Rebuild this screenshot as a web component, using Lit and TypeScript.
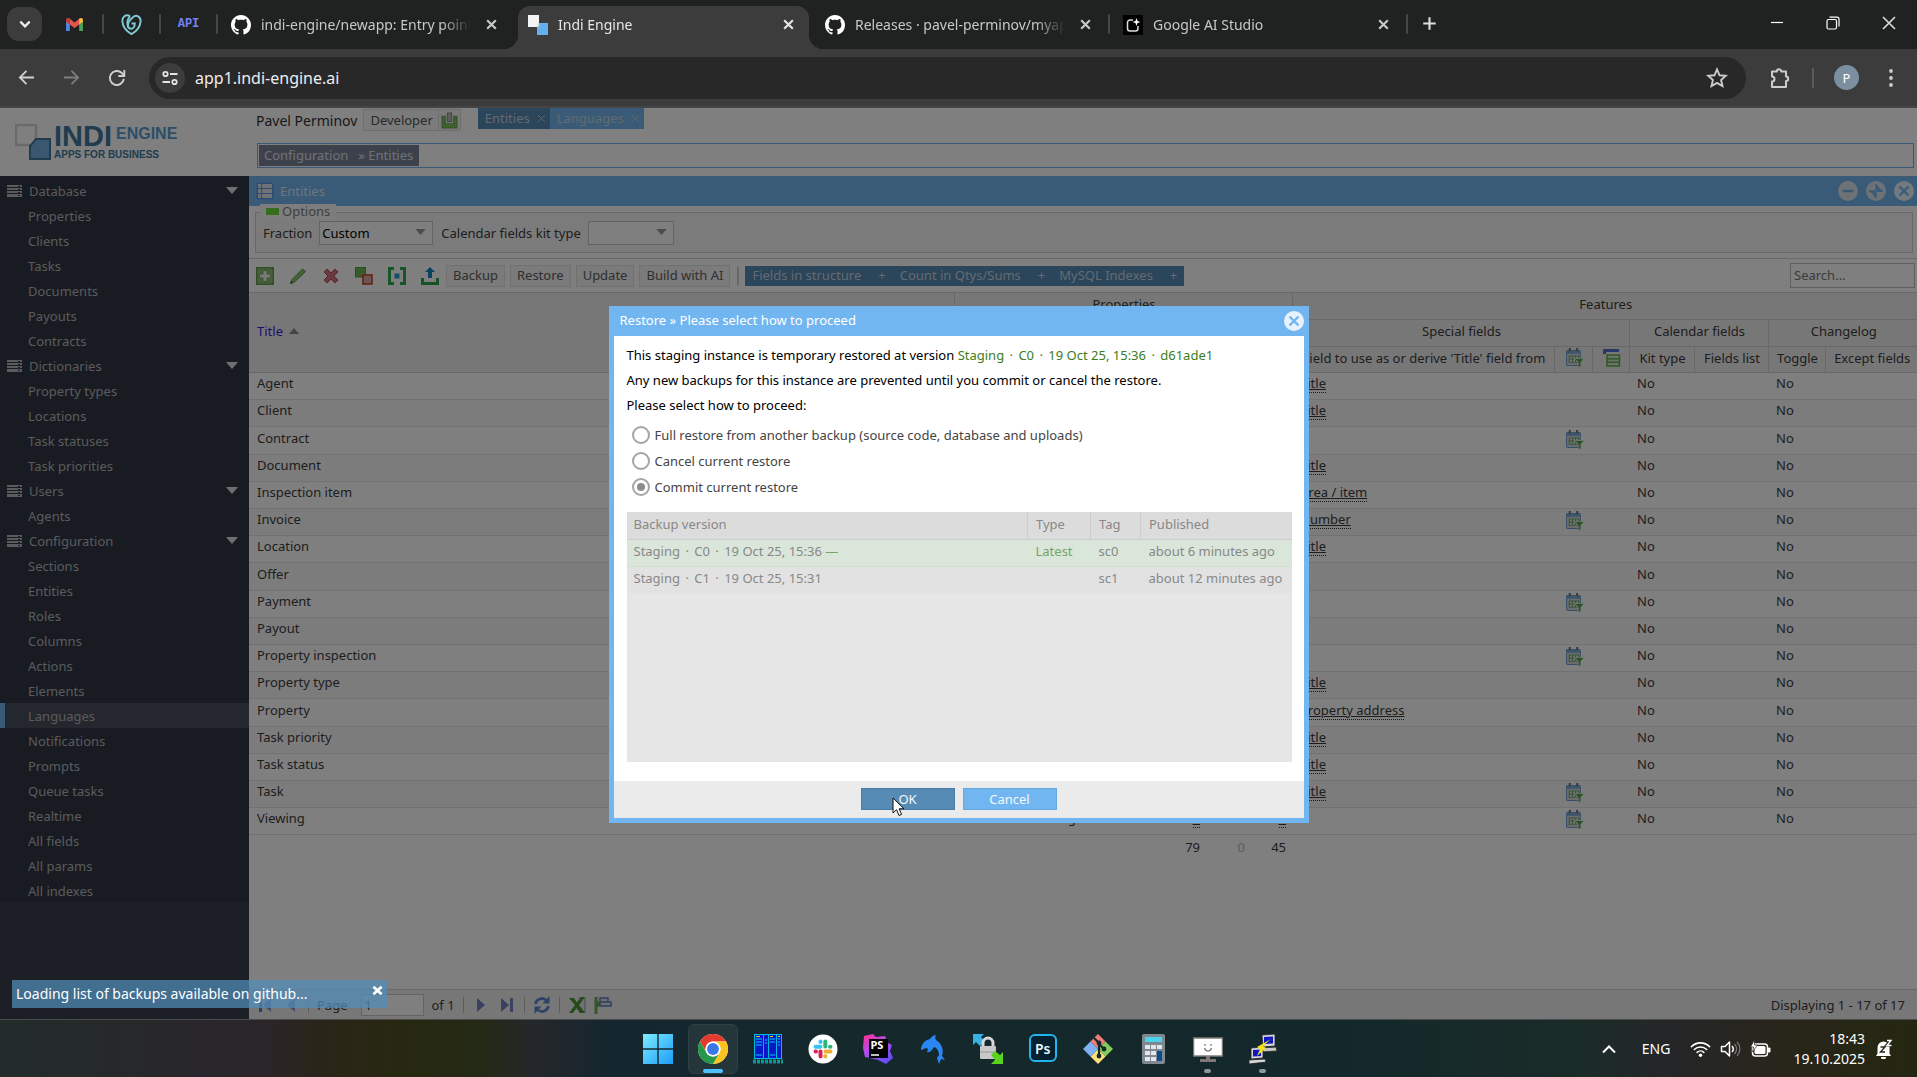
import { LitElement, html, css, svg, nothing } from "lit";
import { customElement, property } from "lit/decorators.js";
import { classMap } from "lit/directives/class-map.js";

/* ---------- shared icons ---------- */

const github = svg`<path fill="#fff" d="M8 0C3.58 0 0 3.58 0 8c0 3.54 2.29 6.53 5.47 7.59.4.07.55-.17.55-.38 0-.19-.01-.82-.01-1.49-2.01.37-2.53-.49-2.69-.94-.09-.23-.48-.94-.82-1.13-.28-.15-.68-.52-.01-.53.63-.01 1.08.58 1.23.82.72 1.21 1.87.87 2.33.66.07-.52.28-.87.51-1.07-1.78-.2-3.64-.89-3.64-3.95 0-.87.31-1.59.82-2.15-.08-.2-.36-1.02.08-2.12 0 0 .67-.21 2.2.82.64-.18 1.32-.27 2-.27s1.36.09 2 .27c1.53-1.04 2.2-.82 2.2-.82.44 1.1.16 1.92.08 2.12.51.56.82 1.27.82 2.15 0 3.07-1.87 3.75-3.65 3.95.29.25.54.73.54 1.48 0 1.07-.01 1.93-.01 2.2 0 .21.15.46.55.38A8.01 8.01 0 0 0 16 8c0-4.42-3.58-8-8-8z"/>`;

const icons: Record<string, [string, unknown]> = {
  github: ["0 0 16 16", github],
  indi: ["0 0 20 20", svg`<rect x="9" y="8" width="11" height="12" fill="#62b0ee"/><rect x="0" y="0" width="11" height="12" fill="#f4f4f4"/><path d="M11 8v4H9" fill="none" stroke="#9bb" />`],
  studio: ["0 0 20 20", svg`<rect width="20" height="20" fill="#000"/><path d="M10 5H7a2.500 2.500 0 0 0-2.500 2.500v6A2.500 2.500 0 0 0 7 16h5.500a2.500 2.500 0 0 0 2.500-2.500V11" fill="none" stroke="#ddd" stroke-width="1.500"/><path d="M13.500 3l1 3 3 1-3 1-1 3-1-3-3-1 3-1z" fill="#fff"/>`],
  gmail: ["0 0 20 16", svg`<path d="M1 3v12h4V7z" fill="#4f86ec"/><path d="M19 3v12h-4V7z" fill="#4aa35a"/><path d="M1 3.500C1 1 3.500.500 5 1.800l5 4 5-4C16.500.500 19 1 19 3.500V5l-4 3-5 3.800L5 8 1 5z" fill="#e0564a"/><path d="M15 1.800C16.500.500 19 1 19 3.500V5l-4 3z" fill="#f0bd3c"/><path d="M5 1.800C3.500.500 1 1 1 3.500V5l4 3z" fill="#b93a35"/>`],
  heart: ["0 0 22 22", svg`<g fill="none" stroke="#7fcbd3" stroke-width="2"><path d="M9.500 2.500C5-.5 1 3 1.500 8c.5 6 5 10.500 9.500 13 4.500-2.500 9-7 9.500-13C21 3 16 0 12.500 3.500 8.500 7 6 11 8 14.500"/><path d="M9.500 2.500C6.500 5 5.500 10 8 14.500c3 2 6.500.5 6.500-4.500h-3.500"/></g>`],
  close: ["0 0 12 12", svg`<path d="M2 2l8 8M10 2l-8 8" stroke="currentColor" stroke-width="2" fill="none"/>`],
  boldClose: ["0 0 12 12", svg`<path d="M1.500 2l9 8M10.500 2l-9 8" stroke="currentColor" stroke-width="3" fill="none"/>`],
  thinClose: ["0 0 12 12", svg`<path d="M1.500 1.500l9 9M10.500 1.500l-9 9" stroke="currentColor" stroke-width="1.200" fill="none"/>`],
  plus: ["0 0 12 12", svg`<path d="M6 1v10M1 6h10" stroke="currentColor" stroke-width="1.700" fill="none"/>`],
  chevron: ["0 0 12 12", svg`<path d="M2 4l4 4 4-4" stroke="#eee" stroke-width="2" fill="none"/>`],
  min: ["0 0 14 14", svg`<path d="M1 6.500h12" stroke="#fff" stroke-width="1.200"/>`],
  max: ["0 0 14 14", svg`<rect x="1" y="3.500" width="9.500" height="9.500" rx="1.500" fill="none" stroke="#fff" stroke-width="1.200"/><path d="M3.500 1.200H11a2 2 0 0 1 2 2v7.300" fill="none" stroke="#fff" stroke-width="1.200"/>`],
  back: ["0 0 18 18", svg`<path d="M17 9H2.500M9 2L2 9l7 7" fill="none" stroke="#d0d0d0" stroke-width="1.900"/>`],
  fwd: ["0 0 18 18", svg`<path d="M1 9h14.500M9 2l7 7-7 7" fill="none" stroke="#7d7d7d" stroke-width="1.900"/>`],
  reload: ["0 0 18 18", svg`<path d="M15.800 9.800A7 7 0 1 1 13.800 4l2 2" fill="none" stroke="#d0d0d0" stroke-width="1.900"/><path d="M16.300 1v6h-6" fill="none" stroke="#d0d0d0" stroke-width="1.900"/>`],
  tune: ["0 0 16 16", svg`<g fill="none" stroke="#e4e4e4" stroke-width="1.800"><circle cx="3.500" cy="4" r="2.200"/><path d="M8 4h7.500M.5 12H8"/><circle cx="12.500" cy="12" r="2.200"/></g>`],
  star: ["0 0 20 20", svg`<path d="M10 2.200l2.300 5.300 5.700.5-4.300 3.800 1.300 5.600-5-3-5 3 1.300-5.600L2 8l5.700-.5z" fill="none" stroke="#ccc" stroke-width="1.700"/>`],
  puzzle: ["0 0 22 22", svg`<path d="M3 4.500h4.800a2.200 2.200 0 0 1 4.400 0H17v5a2.200 2.200 0 0 1 0 4.400V20H3v-5.500a2.500 2.500 0 0 0 0-5z" fill="none" stroke="#ccc" stroke-width="2" stroke-linejoin="round"/>`],
  dots: ["0 0 6 20", svg`<g fill="#ccc"><circle cx="3" cy="3" r="1.900"/><circle cx="3" cy="10" r="1.900"/><circle cx="3" cy="17" r="1.900"/></g>`],
  server: ["0 0 15 12", svg`<g fill="#b4b6ba"><rect width="15" height="2"/><rect y="3" width="15" height="2"/><rect y="6" width="15" height="2"/><rect y="9" width="15" height="3"/></g><g fill="#323846"><rect x="11" y="1" width="2" height="1"/><rect x="11" y="4" width="2" height="1"/><rect x="11" y="7" width="2" height="1"/><rect x="11" y="10" width="2" height="1"/></g>`],
  caretDown: ["0 0 12 7", svg`<path d="M0 0h12L6 7z" fill="currentColor"/>`],
  caretUp: ["0 0 12 7", svg`<path d="M0 7h12L6 0z" fill="#8a8a8a"/>`],
  inbox: ["0 0 16 16", svg`<path d="M1 4h3v7h8V4h3v11H1z" fill="#7cc45e" stroke="#62a550"/><rect x="6" y="1" width="4" height="8" fill="#bbb" stroke="#888"/>`],
  grid: ["0 0 18 18", svg`<rect x=".5" y=".5" width="17" height="17" rx="2" fill="#5f97e4"/><g fill="#dfe6ea"><rect x="2" y="2" width="3" height="4"/><rect x="6" y="2" width="10" height="4"/><rect x="2" y="7" width="3" height="4"/><rect x="6" y="7" width="10" height="4"/><rect x="2" y="12" width="3" height="4"/><rect x="6" y="12" width="10" height="4"/></g>`],
  add: ["0 0 18 18", svg`<rect x=".75" y=".75" width="16.500" height="16.500" fill="#8cc074" stroke="#669a52" stroke-width="1.500"/><path d="M7 3.500h4V7h3.500v4H11v3.500H7V11H3.500V7H7z" fill="#eef2ec" stroke="#6a9a58" stroke-width=".8"/>`],
  pencil: ["0 0 18 18", svg`<path d="M1.500 16.500l1.500-4L13.500 2l3 2.500L5.500 15z" fill="#86c868" stroke="#5a9444" stroke-width="1"/><path d="M1.500 16.500l.8-2.300 1.500 1.400z" fill="#222"/>`],
  del: ["0 0 18 18", svg`<path d="M2 5l3-3 4 4 4-4 3 3-4 4 4 4-3 3-4-4-4 4-3-3 4-4z" fill="#d4707a" stroke="#b0525c"/>`],
  copies: ["0 0 18 18", svg`<rect x=".5" y=".5" width="10" height="9.500" fill="#70b850" stroke="#5a9a42"/><rect x="8" y="8" width="9" height="9" fill="#d0b0a8" stroke="#d2483a" stroke-width="1.700"/>`],
  brackets: ["0 0 18 18", svg`<path d="M6 1.500H1.500v15H6M12 1.500h4.500v15H12" fill="none" stroke="#2cac50" stroke-width="3"/><rect x="6.500" y="6.500" width="5" height="5" fill="#2f9ad8"/>`],
  upload: ["0 0 18 18", svg`<path d="M1.500 11v5.500h15V11" fill="none" stroke="#2fa54c" stroke-width="3"/><path d="M9 0l5 5h-3v6H7V5H4z" fill="#1583bd"/>`],
  calendar: ["0 0 18 18", svg`<rect x="1.500" y="2.500" width="13" height="14" rx="1" fill="#d4dade" stroke="#6a9fd0"/><rect x="1.500" y="2" width="13" height="3.500" fill="#78aad6"/><path d="M4.500 0v3M11.500 0v3" stroke="#777" stroke-width="2"/><path d="M4 7.500h9v6H4zM4 10.500h9M7 7.500v6M10 7.500v6" fill="#e6ebe6" stroke="#74a870" stroke-width="1"/><path d="M9 10h9l-3 3.500V18h-2.500v-4.500z" fill="#4aa83e" stroke="#eee" stroke-width=".8"/>`],
  tablecol: ["0 0 18 18", svg`<path d="M0 1.500h16M1.500 0v5" stroke="#5070cc" stroke-width="3"/><path d="M4 6h12.500v11H4zM4 9.700h12.500M4 13.300h12.500" fill="#d4e6cc" stroke="#5fac4c" stroke-width="1.500"/>`],
  pgFirst: ["0 0 14 14", svg`<path d="M1 0h3v14H1z" fill="#6a78b4"/><path d="M13 0v14L5 7z" fill="#8a96c8"/>`],
  pgPrev: ["0 0 14 14", svg`<path d="M11 0v14L3 7z" fill="#8a96c8"/>`],
  pgNext: ["0 0 14 14", svg`<path d="M3 0v14l8-7z" fill="#7482c0"/>`],
  pgLast: ["0 0 14 14", svg`<path d="M1 0v14l8-7z" fill="#7482c0"/><path d="M10 0h3v14h-3z" fill="#7482c0"/>`],
  refresh: ["0 0 18 18", svg`<g fill="none" stroke="#5a86cc" stroke-width="2.800"><path d="M2.500 8A6.500 6.500 0 0 1 13 4"/><path d="M15.500 10A6.500 6.500 0 0 1 5 14"/></g><path d="M16.500 0v7.500H9.500zM1.500 18v-7.500h7z" fill="#5a86cc"/>`],
  excel: ["0 0 18 18", svg`<path d="M10 2h7v14h-6" fill="#dfe4ea" stroke="#9aa6b8" stroke-width="1.200"/><path d="M1 2h5l3 4.500L13 1h4l-6 8 6 8h-5l-3.500-5L5 17H1l6-8z" fill="#4a9430"/>`],
  flag: ["0 0 18 18", svg`<path d="M2 1v17" stroke="#68ae52" stroke-width="3"/><path d="M2 3l5 5-5 5z" fill="#68ae52"/><path d="M6 2h8v4H6zM6 6v4h11V6h-3" fill="#d8dee8" stroke="#6080bc" stroke-width="1.500"/>`],
  orbMin: ["0 0 20 20", svg`<circle cx="10" cy="10" r="10" fill="#dde5ec"/><path d="M4.500 10h11" stroke="#72b6f1" stroke-width="2.600"/>`],
  orbMax: ["0 0 20 20", svg`<circle cx="10" cy="10" r="10" fill="#dde5ec"/><path d="M10 3l5 5.500h-5zM10 17l-5-5.500h5zM3 10l5.500-1v5zM17 10l-5.500 1V6z" fill="#72b6f1"/><path d="M10 3v14M3 10h14" stroke="#72b6f1" stroke-width="1.400"/>`],
  orbClose: ["0 0 20 20", svg`<circle cx="10" cy="10" r="10" fill="#e8f2fc"/><path d="M5.500 5.500l9 9M14.500 5.500l-9 9" stroke="#72b6f1" stroke-width="2.400"/>`],
  win: ["0 0 30 30", svg`<defs><linearGradient id="w" x1="0" y1="0" x2="1" y2="1"><stop offset="0" stop-color="#7cecfd"/><stop offset="1" stop-color="#1c9cf8"/></linearGradient></defs><path fill="url(#w)" d="M0 0h14.300v14.300H0zM15.700 0H30v14.300H15.700zM0 15.700h14.300V30H0zM15.700 15.700H30V30H15.700z"/>`],
  chrome: ["0 0 48 48", svg`<circle cx="24" cy="24" r="24" fill="#fff"/><path d="M24 12h20.800A24 24 0 0 0 3.200 12l10.400 18A12 12 0 0 1 24 12z" fill="#e33b2e"/><path d="M34.400 30L24 48a24 24 0 0 0 20.800-36H24a12 12 0 0 1 10.400 18z" fill="#fcc31e"/><path d="M13.600 30L3.200 12A24 24 0 0 0 24 48l10.400-18a12 12 0 0 1-20.800 0z" fill="#279847"/><circle cx="24" cy="24" r="12" fill="#fff"/><circle cx="24" cy="24" r="9.500" fill="#3b79e8"/>`],
  racks: ["0 0 30 30", svg`<rect x="1" y="0" width="28" height="25" fill="#00b8e0"/><g fill="#0718c8"><rect x="2" y="1" width="8" height="23"/><rect x="11" y="1" width="4" height="23"/><rect x="16" y="1" width="7" height="23"/><rect x="24" y="1" width="4" height="23"/></g><g stroke="#00d0f0"><path d="M3 5h6M3 8h6M3 11h6M17 5h5M17 8h5M12 6h2M12 9h2M25 5h2M25 8h2M25 11h2M3 21h6M17 21h5"/></g><path d="M3 2.500h4M17 2.500h3M25 2.500h2" stroke="#e8d020" stroke-width="1.200"/><path d="M0 27.500h30" stroke="#089898" stroke-width="4" stroke-dasharray="3 1"/>`],
  slack: ["0 0 30 30", svg`<circle cx="15" cy="15" r="14.500" fill="#fff"/><g stroke-width="4" stroke-linecap="round" fill="none"><path d="M7.500 12.700h5M12.500 7.500v.5" stroke="#36c5f0"/><path d="M17.300 7.500v5M22 12.700h.5" stroke="#2eb67d"/><path d="M17.500 17.500h5M17.300 22v.5" stroke="#ecb22e"/><path d="M12.500 17.500v5M7.500 17.500h.5" stroke="#e01e5a"/></g>`],
  storm: ["0 0 30 30", svg`<defs><linearGradient id="s" x1="0" y1="0" x2="0.600" y2="1"><stop offset="0" stop-color="#ff2f8e"/><stop offset=".5" stop-color="#b24cf0"/><stop offset="1" stop-color="#6a4cf4"/></linearGradient></defs><path d="M1 2l9-2 3 3 9-1 3 7 4 2-2 6 3 7-7 6-8-4-13-3-2-9z" fill="url(#s)"/><rect x="6" y="5" width="19" height="19" fill="#000"/><path d="M8 21h8" stroke="#fff" stroke-width="1.500"/><text x="7.500" y="15" font-family="Noto Sans, sans-serif" font-weight="700" font-size="11" fill="#fff">PS</text>`],
  dolphin: ["0 0 30 30", svg`<path d="M3 16c0-6 4-10 9-11 2-3 4-4 6-4-1 2-1 3 0 5 6 4 8 10 6 16l3 4-4-1-2 5-2-6 2-3c0-4-2-7-5-8-2 4-5 6-7 5 1-2 1-3 0-4-2 0-4 1-5 2z" fill="#2a86f2"/>`],
  winscp: ["0 0 30 30", svg`<path d="M0 0h11L8 3l4 4-5 5-4-4-3 3z" fill="#36b2e4"/><path d="M10 13V9a5 5 0 0 1 10 0v4" fill="none" stroke="#d8d8d8" stroke-width="3"/><rect x="7" y="12" width="16" height="13" rx="1" fill="#c8c8c8"/><path d="M7 18h16" stroke="#999"/><path d="M30 30H18l4-4-4-5 4-4 5 4 3-3z" fill="#5ad21e"/>`],
  photoshop: ["0 0 30 30", svg`<rect x="2" y="1" width="26" height="26" rx="5" fill="#05202e" stroke="#22b4ea" stroke-width="2"/><text x="7" y="19.500" font-family="Noto Sans, sans-serif" font-weight="600" font-size="14" fill="#e6f4fa">Ps</text>`],
  git: ["0 0 30 30", svg`<path d="M15 0l7.500 7.500L15 15 7.500 7.500z" fill="#f27d78"/><path d="M30 15l-7.500 7.500L15 15l7.500-7.500z" fill="#84ca5c"/><path d="M15 30l-7.500-7.500L15 15l7.500 7.500z" fill="#fce078"/><path d="M0 15l7.500 7.500L15 15 7.500 7.500z" fill="#7fb0f2"/><path d="M11 4l5 5v14M16 10l6 6" stroke="#15282b" stroke-width="2.200" fill="none"/><circle cx="16" cy="9" r="2.400" fill="#15282b"/><circle cx="16" cy="22" r="2.400" fill="#15282b"/><circle cx="21" cy="15" r="2.400" fill="#15282b"/>`],
  calc: ["0 0 30 30", svg`<rect x="4" y="0" width="23" height="30" rx="2" fill="#7f8791"/><rect x="7" y="3" width="17" height="5" fill="#4cd5ea"/><g fill="#e2e6ea"><rect x="7" y="11" width="5" height="4"/><rect x="13" y="11" width="5" height="4"/><rect x="19" y="11" width="5" height="4"/><rect x="7" y="17" width="5" height="4"/><rect x="13" y="17" width="5" height="4"/><rect x="7" y="23" width="5" height="4"/><rect x="13" y="23" width="5" height="4"/></g><rect x="19" y="17" width="5" height="10" fill="#0c4a8c"/>`],
  monitor: ["0 0 30 30", svg`<rect x=".5" y="4" width="29" height="18" fill="#fff" stroke="#807876" stroke-width="1.500"/><path d="M13 22h4v4h-4zM7 25h16v3H7z" fill="#807876"/><path d="M12 10v2M18 10v2M11.500 14c1 4 6 4 7 0" stroke="#777" stroke-width="1.200" fill="none"/>`],
  putty: ["0 0 30 30", svg`<g stroke="#222" stroke-width=".8"><path d="M14 1l13-1v12l-12 1z" fill="#d6d6d6"/><path d="M12 14l16-1 1 4-16 1z" fill="#c8c8c8"/><path d="M3 14l12-1v11l-12 1z" fill="#d6d6d6"/><path d="M1 26l16-1 1 3-17 2z" fill="#d8d8d8"/></g><path d="M16 3l9-.5v7l-9 .5zM5 16l8-.5v6.500l-8 .5z" fill="#1018c0"/><path d="M23 5l-8 7 3 2-9 8 3-7-3-2z" fill="#f4e414"/>`],
  up: ["0 0 14 10", svg`<path d="M1 8.500L7 2.500l6 6" stroke="#fff" stroke-width="2" fill="none"/>`],
  wifi: ["0 0 22 18", svg`<g fill="none" stroke="#fff" stroke-width="1.600" stroke-linecap="round"><path d="M1.500 6.500a13.500 13.500 0 0 1 19 0M4.500 9.500a9.200 9.200 0 0 1 13 0M7.500 12.500a5 5 0 0 1 7 0"/></g><circle cx="11" cy="15.500" r="1.800" fill="#fff"/>`],
  sound: ["0 0 20 18", svg`<path d="M1 6.500h3.500L9 2v14l-4.500-4.500H1z" fill="none" stroke="#fff" stroke-width="1.500" stroke-linejoin="round"/><path d="M11.500 6a4.500 4.500 0 0 1 0 6" stroke="#fff" fill="none" stroke-width="1.500"/><path d="M14 4a7 7 0 0 1 0 10M16.500 2a10 10 0 0 1 0 14" stroke="#777" fill="none" stroke-width="1.300"/>`],
  battery: ["0 0 20 18" , svg`<rect x="2" y="4" width="15" height="12" rx="3" fill="none" stroke="#fff" stroke-width="1.500"/><rect x="4" y="6" width="11" height="8" rx="1.500" fill="#fff"/><path d="M18 8v4h1.500V8z" fill="#fff" stroke="#fff"/><path d="M4 0L0 7h3l-1 5 5-7H4z" fill="#fff" stroke="#2a2828" stroke-width=".7"/>`],
  bell: ["0 0 18 20", svg`<path d="M2.500 14.500V8.500a6 6 0 0 1 12 0v6L16 17H1z" fill="#fff"/><path d="M6 18h5a2.500 2.500 0 0 1-5 0z" fill="#fff"/><path d="M5.500 8h4.500l-4.500 5H10" fill="none" stroke="#26281a" stroke-width="1.400"/><path d="M11.500 1.500h4.500L12 6h4.500" fill="none" stroke="#26281a" stroke-width="3"/><path d="M12 1.500h4L12 6.500h4.500" fill="none" stroke="#fff" stroke-width="1.400"/>`],
  cursor: ["0 0 13 20", svg`<path d="M1 1v15l3.500-3.300L7 18.500l2.600-1.100-2.500-5.600H12z" fill="#fff" stroke="#111" stroke-width="1"/>`],
  mark: ["0 0 36 36", svg`<rect x="1" y="1" width="20" height="20" fill="#fff" stroke="#d5d5d5" stroke-width="2.500"/><path d="M21 15h14v20H15V22z" fill="#72b0e0" stroke="#42799f" stroke-width="2"/>`],
};

const icon = (name: string, w: number, h = w) =>
  html`<svg viewBox=${icons[name][0]} width=${w} height=${h} aria-hidden="true">${icons[name][1]}</svg>`;

const base = css`
  *, *::before, *::after { box-sizing: border-box; }
  :host { font-family: "Noto Sans", sans-serif; font-size: 13px; }
  svg { display: block; flex: none; }
  button, input, select { font: inherit; color: inherit; margin: 0; }
  button { border: 0; padding: 0; background: none; display: flex; align-items: center; justify-content: center; }
  a { color: inherit; text-decoration: none; }
`;

/* ---------- browser frame ---------- */

@customElement("browser-frame")
class BrowserFrame extends LitElement {
  static styles = [base, css`
    :host { display: block; color: #ddd; }
    .strip { display: flex; height: 49px; background: #1f2221; padding-left: 7px; }
    .search { width: 35px; height: 34px; margin: 7px 4px 0 0; border-radius: 12px; background: #3c3c3c; }
    .pin { width: 57px; position: relative; display: flex; align-items: center; justify-content: center; padding-bottom: 1px; }
    .sep::after { content: ""; width: 2px; height: 20px; border-radius: 1px; background: #454746; position: absolute; right: -1px; top: 14px; }
    .api { font: 700 12px "Liberation Mono", monospace; color: #7182f4; }
    .tab { position: relative; flex: 0 1 298px; min-width: 0; display: flex; align-items: center; padding: 0 14px; gap: 10px; color: #c8c8c8; font-size: 14px; }
    .tab.on { flex-basis: 291px; margin: 6px 2px 0 3px; padding: 0 11px 6px 10px; background: #3c3c3c; border-radius: 12px 12px 0 0; color: #e6e6e6; }
    .tab.on::before, .tab.on::after { content: ""; position: absolute; bottom: 0; width: 14px; height: 14px; }
    .tab.on::before { right: 100%; background: radial-gradient(circle at 0 0, transparent 14px, #3c3c3c 14px); }
    .tab.on::after { left: 100%; background: radial-gradient(circle at 100% 0, transparent 14px, #3c3c3c 14px); }
    .name { flex: 1; overflow: hidden; white-space: nowrap; mask-image: linear-gradient(90deg, #000 86%, transparent); line-height: 20px; }
    .x { width: 20px; height: 20px; }
    .new { width: 44px; height: 47px; }
    .wins { margin-left: auto; display: flex; }
    .wins button { width: 56px; height: 46px; }
    .bar { display: flex; align-items: center; height: 59px; padding: 0 4px; background: #3c3c3c; border-bottom: 2px solid #454545; }
    .nav { width: 45px; height: 40px; }
    .omni { flex: 1; height: 42px; margin: 0 12px 0 10px; display: flex; align-items: center; background: #282828; border-radius: 21px; padding: 0 18px 0 6px; gap: 10px; color: #eee; }
    .site { width: 30px; height: 30px; border-radius: 50%; background: #3c3c3c; }
    .url { flex: 1; border: 0; background: none; padding: 0; font-size: 16px; outline: 0; min-width: 0; }
    .tool { width: 44px; height: 40px; }
    .line { width: 2px; height: 20px; background: #5a5a5a; margin: 0 20px 0 10px; }
    .me { width: 25px; height: 25px; border-radius: 50%; background: #7b8fa1; color: #fff; font-size: 13px; margin-right: 10px; }
  `];

  private tab(ic: string, name: string, on = false, sep = false) {
    return html`<div class=${classMap({ tab: true, on, sep })}>
      ${icon(ic, 20)}<span class="name">${name}</span>
      <button class="x" aria-label="Close tab">${icon("close", 13)}</button>
    </div>`;
  }

  render() {
    return html`
      <div class="strip">
        <button class="search" aria-label="Search tabs">${icon("chevron", 14)}</button>
        <div class="pin sep">${icon("gmail", 19, 15)}</div>
        <div class="pin sep">${icon("heart", 21)}</div>
        <div class="pin sep"><span class="api">API</span></div>
        ${this.tab("github", "indi-engine/newapp: Entry point")}
        ${this.tab("indi", "Indi Engine", true)}
        ${this.tab("github", "Releases · pavel-perminov/myapp", false, true)}
        ${this.tab("studio", "Google AI Studio", false, true)}
        <button class="new" aria-label="New tab">${icon("plus", 15)}</button>
        <div class="wins">
          <button aria-label="Minimize">${icon("min", 14)}</button>
          <button aria-label="Restore window">${icon("max", 14)}</button>
          <button aria-label="Close window">${icon("thinClose", 16)}</button>
        </div>
      </div>
      <div class="bar">
        <button class="nav" aria-label="Back">${icon("back", 17)}</button>
        <button class="nav" aria-label="Forward">${icon("fwd", 17)}</button>
        <button class="nav" aria-label="Reload">${icon("reload", 18)}</button>
        <div class="omni">
          <button class="site" aria-label="Site information">${icon("tune", 16)}</button>
          <input class="url" aria-label="Address" value="app1.indi-engine.ai">
          <button aria-label="Bookmark">${icon("star", 22)}</button>
        </div>
        <button class="tool" aria-label="Extensions">${icon("puzzle", 22)}</button>
        <span class="line"></span>
        <button class="me" aria-label="Profile">P</button>
        <button class="tool" aria-label="Menu">${icon("dots", 6, 20)}</button>
      </div>`;
  }
}

/* ---------- sidebar ---------- */

const menu: [string, string[]][] = [
  ["Database", ["Properties", "Clients", "Tasks", "Documents", "Payouts", "Contracts"]],
  ["Dictionaries", ["Property types", "Locations", "Task statuses", "Task priorities"]],
  ["Users", ["Agents"]],
  ["Configuration", ["Sections", "Entities", "Roles", "Columns", "Actions", "Elements", "Languages", "Notifications", "Prompts", "Queue tasks", "Realtime", "All fields", "All params", "All indexes"]],
];

@customElement("side-menu")
class SideMenu extends LitElement {
  static styles = [base, css`
    :host { display: block; background: #383f4d; color: #b4b6ba; }
    nav { background: #313643; padding-top: 2px; }
    .group, .item { display: flex; align-items: center; width: 100%; height: 25px; }
    .group { padding-left: 7px; padding-right: 11px; gap: 7px; justify-content: flex-start; }
    .group span { flex: 1; text-align: left; }
    .item { padding-left: 28px; }
    .item.on { background: #4a4f5c; border-left: 5px solid #72b6f1; padding-left: 23px; }
    .arrow { color: #dcdee0; }
  `];
  render() {
    return html`<nav>${menu.map(([g, items]) => html`
      <button class="group">${icon("server", 15, 12)}<span>${g}</span><i class="arrow">${icon("caretDown", 12, 7)}</i></button>
      ${items.map((i) => html`<a href="#" class=${classMap({ item: true, on: i === "Languages" })}>${i}</a>`)}`)}
    </nav>`;
  }
}

/* ---------- entities grid ---------- */

type Row = [title: string, field?: string, cal?: boolean];
const rows: Row[] = [
  ["Agent", "Title"], ["Client", "Title"], ["Contract", "", true], ["Document", "Title"],
  ["Inspection item", "Area / item"], ["Invoice", "Number", true], ["Location", "Title"], ["Offer"],
  ["Payment", "", true], ["Payout"], ["Property inspection", "", true], ["Property type", "Title"],
  ["Property", "Property address"], ["Task priority", "Title"], ["Task status", "Title"],
  ["Task", "Title", true], ["Viewing", "", true],
];

@customElement("entity-panel")
class EntityPanel extends LitElement {
  static styles = [base, css`
    :host { display: flex; flex-direction: column; min-width: 0; background: #fff; color: #3c3c3c; }
    .title { display: flex; align-items: center; height: 30px; background: #72b6f1; padding: 0 3px 0 7px; gap: 6px; color: #dfeaf4; }
    .title h2 { flex: 1; margin: 0; font-size: 13px; font-weight: 400; }
    .orbs { display: flex; gap: 8px; }
    .opts { height: 53px; padding: 6px 4px 6px 6px; border-bottom: 1px solid #d0d0d0; }
    fieldset { position: relative; display: flex; align-items: center; height: 41px; min-width: 0; margin: 0; border: 1px solid #d0d0d0; background: #f6f6f6; padding: 1px 7px 0; }
    .legend { position: absolute; left: 4px; top: -9px; height: 15px; line-height: 13px; padding: 0 6px; display: flex; gap: 3px; align-items: center; background: #fbfbfb; color: #808080; }
    .dot { width: 13px; height: 7px; background: #6cd83c; }
    .pick { position: relative; display: flex; align-items: center; margin: 0 8px 0 7px; color: #999; }
    select { appearance: none; height: 24px; border: 1px solid #c8c8c8; border-radius: 0; background: #fff; padding: 0 2px 1px; color: #000; width: 114px; }
    .narrow select { width: 86px; }
    .pick svg { position: absolute; right: 7px; top: 8px; }
    .tools { display: flex; align-items: center; height: 34px; padding: 0 2px 0 7px; border-bottom: 1px solid #d0d0d0; }
    .ics { display: flex; gap: 15px; margin-right: 7px; }
    .btn { height: 22px; margin-right: 5px; padding: 0 6px 1px; border: 1px solid #e0e0e0; background: #f6f6f6; color: #606060; white-space: nowrap; }
    .bar { width: 2px; height: 18px; background: #ccc; margin: 0 6px 0 2px; }
    .chips { display: flex; background: #568bb6; color: #c8d4de; height: 20px; }
    .chips button { gap: 17px; padding: 0 7px 1px; white-space: nowrap; }
    .find { margin-left: auto; width: 125px; height: 25px; border: 1px solid #c0c0c0; background: #fff; padding: 0 3px 2px; border-radius: 0; }
    .find::placeholder { color: #777; opacity: 1; }
    .scroll { flex: 1; min-height: 0; overflow: hidden; }
    table { width: 100%; table-layout: fixed; border-collapse: collapse; }
    th, td { font-weight: 400; text-align: left; white-space: nowrap; overflow: hidden; }
    td { padding: 0 6px 5px 8px; }
    td.ic { padding-bottom: 2px; }
    th { background: #efefef; border: solid #d0d0d0; border-width: 0 0 1px 1px; text-align: center; padding: 0 2px 3px 4px; }
    thead tr { height: 26px; }
    thead tr:nth-child(2) { height: 27px; }
    th.first { text-align: left; border-left: 0; padding: 0 8px 3px; }
    .sort { display: inline-flex; align-items: center; gap: 5px; color: #3d1ee0; }
    th svg, td svg { margin: 0 auto; }
    tbody tr { height: 27px; border-bottom: 1px solid #e2e2e2; }
    tbody tr:nth-child(5n + 3) { height: 28px; }
    tbody tr:nth-child(even) { background: #f9f9f9; }
    tfoot tr { height: 27px; }
    tfoot td { padding-bottom: 1px; }
    .ref { text-decoration: underline; border-bottom: 1px dotted #333; }
    .num { text-align: right; }
    .mute { color: #bbb; }
    .foot { display: flex; align-items: center; height: 30px; background: #efefef; border-top: 1px solid #d0d0d0; padding: 0 12px 0 7px; gap: 8px; }
    .foot button { min-width: 18px; }
    .foot .s { width: 1px; height: 16px; background: #bbb; }
    .foot label { display: flex; align-items: center; gap: 13px; }
    .foot input { width: 63px; height: 22px; border: 1px solid #c8c8c8; border-radius: 0; padding: 0 3px; background: #fff; }
    .foot output { margin-left: auto; }
  `];

  render() {
    const widths = [67, 118, 67, 45, 41, 262, 38, 37, 65, 74, 57, 92];
    return html`
      <div class="title">${icon("grid", 18)}<h2>Entities</h2>
        <div class="orbs">
          <button aria-label="Minimize">${icon("orbMin", 20)}</button>
          <button aria-label="Maximize">${icon("orbMax", 20)}</button>
          <button aria-label="Close">${icon("orbClose", 20)}</button>
        </div>
      </div>
      <div class="opts"><fieldset aria-label="Options">
        <div class="legend"><i class="dot"></i>Options</div>
        <label for="fr">Fraction</label>
        <div class="pick"><select id="fr"><option>Custom</option></select>${icon("caretDown", 11, 6)}</div>
        <label for="kit">Calendar fields kit type</label>
        <div class="pick narrow"><select id="kit"><option></option></select>${icon("caretDown", 11, 6)}</div>
      </fieldset></div>
      <div class="tools">
        <div class="ics">${["add", "pencil", "del", "copies", "brackets", "upload"].map((n) => html`<button aria-label=${n}>${icon(n, 18)}</button>`)}</div>
        ${["Backup", "Restore", "Update", "Build with AI"].map((t) => html`<button class="btn">${t}</button>`)}
        <i class="bar"></i>
        <div class="chips">${["Fields in structure", "Count in Qtys/Sums", "MySQL Indexes"].map((t) => html`<button>${t}<span>+</span></button>`)}</div>
        <input class="find" aria-label="Search" placeholder="Search...">
      </div>
      <div class="scroll"><table>
        <colgroup><col>${widths.map((w) => html`<col style="width:${w}px">`)}</colgroup>
        <thead>
          <tr><th class="first" rowspan="3"><span class="sort">Title ${icon("caretUp", 12, 6)}</span></th>
            <th colspan="5">Properties</th><th colspan="7">Features</th></tr>
          <tr><th colspan="5" rowspan="2"></th><th colspan="3">Special fields</th><th colspan="2">Calendar fields</th><th colspan="2">Changelog</th></tr>
          <tr><th>Field to use as or derive 'Title' field from</th><th>${icon("calendar", 19)}</th><th>${icon("tablecol", 18)}</th>
            <th>Kit type</th><th>Fields list</th><th>Toggle</th><th>Except fields</th></tr>
        </thead>
        <tbody>${rows.map(([t, f, cal]) => {
          const last = t === "Viewing";
          return html`<tr><td>${t}</td>
            <td>${last ? "Custom" : nothing}</td><td>${last ? "viewing" : nothing}</td>
            <td class="num">${last ? html`<span class="ref">6</span>` : nothing}</td>
            <td class="num mute">${last ? "0" : nothing}</td>
            <td class="num">${last ? html`<span class="ref">2</span>` : nothing}</td>
            <td>${f ? html`<a href="#" class="ref">${f}</a>` : nothing}</td>
            <td class="ic">${cal ? icon("calendar", 19) : nothing}</td><td></td>
            <td>No</td><td></td><td>No</td><td></td></tr>`;
        })}</tbody>
        <tfoot><tr><td></td><td></td><td></td><td class="num">79</td><td class="num mute">0</td><td class="num">45</td><td colspan="7"></td></tr></tfoot>
      </table></div>
      <div class="foot">
        <button aria-label="First page">${icon("pgFirst", 14)}</button>
        <button aria-label="Previous page">${icon("pgPrev", 14)}</button>
        <i class="s"></i>
        <label>Page <input value="1"></label><span>of 1</span><i class="s"></i>
        <button aria-label="Next page">${icon("pgNext", 14)}</button>
        <button aria-label="Last page">${icon("pgLast", 14)}</button><i class="s"></i>
        <button aria-label="Refresh">${icon("refresh", 18)}</button><i class="s"></i>
        <button aria-label="Export">${icon("excel", 18)}</button>
        <button aria-label="Flag">${icon("flag", 18)}</button>
        <output>Displaying 1 - 17 of 17</output>
      </div>`;
  }
}

/* ---------- restore dialog ---------- */

/** Joins the parts of a version name with widely set dots. */
const version = (...parts: string[]) =>
  parts.map((p, i) => (i ? html`<span class="mid"> · </span>${p}` : p));

@customElement("restore-dialog")
class RestoreDialog extends LitElement {
  static styles = [base, css`
    :host { display: block; width: 700px; border: 5px solid #72b6f1; border-top: 0; background: #fff; color: #000; }
    header { display: flex; align-items: center; justify-content: space-between; height: 30px; background: #72b6f1; color: #fff; padding: 0 0 2px 6px; }
    header button { padding-top: 2px; }
    h1 { margin: 0; font-size: 13px; font-weight: 400; }
    .body { padding: 7px 12px 19px 13px; }
    p { margin: 0; line-height: 25px; }
    .mid { margin: 0 2px; }
    .ver { color: #3c7d1c; }
    .choices { padding: 4px 0 12px 5px; color: #444; }
    .choices label { display: flex; align-items: center; height: 26px; gap: 5px; }
    input { appearance: none; width: 18px; height: 18px; border: 2px solid #a4a4a4; border-radius: 50%; background: #fff; display: grid; place-items: center; }
    input:checked::before { content: ""; width: 8px; height: 8px; border-radius: 50%; background: #8c8c8c; }
    .list { height: 250px; background: #e6e6e6; color: #888; }
    table { width: 100%; border-collapse: collapse; table-layout: fixed; }
    th, td { font-weight: 400; text-align: left; padding: 0 8px 2px; white-space: nowrap; }
    td { padding-bottom: 3px; }
    th:first-child, td:first-child { padding-left: 7px; }
    tr { height: 27px; }
    th { background: #dcdcdc; border-bottom: 1px solid #cdcdcd; }
    th + th { border-left: 1px solid #cdcdcd; }
    .live td { background: #dae6da; border-bottom: 1px solid #cfe0cf; }
    .next td { background: #e2e2e2; }
    .ok { color: #76a569; }
    .c2 { width: 63px; } .c3 { width: 50px; } .c4 { width: 151px; }
    footer { display: flex; justify-content: center; gap: 8px; padding: 7px 0 8px; background: #ebebeb; }
    footer button { position: relative; width: 94px; height: 22px; padding-bottom: 1px; background: #72b6f1; border: 1px solid #66a8e0; color: #f4f8fc; }
    footer .main { background: #568bb6; border-color: #4a7ca8; }
    .cursor { position: absolute; left: 30px; top: 8px; }
  `];
  render() {
    return html`
      <header><h1>Restore » Please select how to proceed</h1><button aria-label="Close">${icon("orbClose", 20)}</button></header>
      <div class="body">
        <p>This staging instance is temporary restored at version <span class="ver">${version("Staging", "C0", "19 Oct 25, 15:36", "d61ade1")}</span></p>
        <p>Any new backups for this instance are prevented until you commit or cancel the restore.</p>
        <p>Please select how to proceed:</p>
        <div class="choices">
          <label><input type="radio" name="m">Full restore from another backup (source code, database and uploads)</label>
          <label><input type="radio" name="m">Cancel current restore</label>
          <label><input type="radio" name="m" checked>Commit current restore</label>
        </div>
        <div class="list"><table>
          <colgroup><col><col class="c2"><col class="c3"><col class="c4"></colgroup>
          <thead><tr><th>Backup version</th><th>Type</th><th>Tag</th><th>Published</th></tr></thead>
          <tbody>
            <tr class="live"><td>${version("Staging", "C0", "19 Oct 25, 15:36")} <span class="ok">—</span></td><td class="ok">Latest</td><td>sc0</td><td>about 6 minutes ago</td></tr>
            <tr class="next"><td>${version("Staging", "C1", "19 Oct 25, 15:31")}</td><td></td><td>sc1</td><td>about 12 minutes ago</td></tr>
          </tbody>
        </table></div>
      </div>
      <footer><button class="main">OK<span class="cursor">${icon("cursor", 13, 20)}</span></button><button>Cancel</button></footer>`;
  }
}

/* ---------- taskbar ---------- */

@customElement("task-bar")
class TaskBar extends LitElement {
  static styles = [base, css`
    :host { display: grid; grid-template-columns: 1fr auto 1fr; align-items: center; height: 58px; border-top: 1px solid #4a4c4e; color: #fff; font-size: 14px;
      background: linear-gradient(90deg, #232b2b 0, #26292a 6%, #29262b 11%, #2a2528 14%, #2a2518 17%, #272811 21%, #242a15 25%, #24272b 28%, #14262f 32%, #15292c 45%, #13282b 70%, #1a2c28 82%, #252628 87%, #28251a 93%, #242710 100%); }
    .apps { grid-column: 2; display: flex; gap: 5px; padding-left: 3px; }
    .apps button { position: relative; width: 50px; height: 50px; border-radius: 6px; }
    .apps .on { background: #24363a; border: 1px solid #2e4044; }
    .apps .on::after, .apps .run::after { content: ""; position: absolute; bottom: 1px; width: 7px; height: 4px; border-radius: 2px; background: #8f9698; }
    .apps .on::after { width: 20px; background: #4cc2ff; bottom: 0; }
    .tray { display: flex; align-items: center; justify-content: flex-end; padding-right: 24px; }
    .lang { margin: 0 20px 0 26px; }
    .sys { gap: 9px; }
    .clock { text-align: right; line-height: 20px; margin: 0 10px 0 22px; }
  `];
  render() {
    const apps = ["win", "chrome", "racks", "slack", "storm", "dolphin", "winscp", "photoshop", "git", "calc", "monitor", "putty"];
    return html`
      <div class="apps">${apps.map((a) => html`<button aria-label=${a} class=${classMap({ on: a === "chrome", run: a === "monitor" || a === "putty" })}>${icon(a, 30)}</button>`)}</div>
      <div class="tray">
        <button aria-label="Hidden icons">${icon("up", 14, 10)}</button>
        <button class="lang">ENG</button>
        <button class="sys" aria-label="System">${icon("wifi", 21, 18)}${icon("sound", 21, 18)}${icon("battery", 21, 18)}</button>
        <div class="clock">18:43<br>19.10.2025</div>
        <button aria-label="Notifications">${icon("bell", 18, 20)}</button>
      </div>`;
  }
}

/* ---------- page ---------- */

@customElement("app-root")
class AppRoot extends LitElement {
  @property() user = "Pavel Perminov";

  static styles = [base, css`
    :host { display: flex; flex-direction: column; height: 100vh; overflow: hidden; }
    .page { position: relative; flex: 1; min-height: 0; display: grid; grid-template: 68px 1fr / 249px 1fr; background: #fff; color: #333; }
    .logo { display: flex; align-items: flex-start; padding: 16px 0 0 15px; gap: 3px; font-family: "Liberation Sans", sans-serif; font-weight: 700; }
    .words { display: flex; flex-direction: column; }
    .brand { display: flex; gap: 4px; height: 25px; line-height: 25px; }
    .indi { font-size: 29px; color: #42789f; }
    .engine { font-size: 16px; line-height: 20px; color: #5b9ccf; }
    .sub { font-size: 10px; line-height: 12px; color: #42789f; }
    .head { padding: 0 3px 0 7px; display: flex; flex-direction: column; min-width: 0; }
    .line { display: flex; height: 35px; }
    .user { margin: 4px 6px 0 0; line-height: 18px; font-size: 14px; }
    .role { display: flex; height: 22px; margin: 1px 17px 0 0; border: 1px solid #dcdcdc; background: #f6f6f6; color: #555; }
    .role span { padding: 0 5px 0 6px; line-height: 20px; border-right: 1px solid #dcdcdc; }
    .role button { width: 21px; }
    .tabs { display: flex; height: 21px; color: #c8d4de; }
    .tabs button { gap: 7px; padding: 0 4px 1px 7px; background: #72b6f1; }
    .tabs .on { background: #568bb6; }
    .crumbs { height: 25px; border: 1px solid #72b0ea; padding: 1px; margin-left: 1px; }
    .trail { display: inline-flex; height: 21px; align-items: center; gap: 10px; padding: 0 6px 1px 5px; background: #7a8399; color: #dde2ec; }
    .mask { position: absolute; inset: 0; background: rgba(0, 0, 0, 0.5); display: grid; place-items: center; padding-top: 2px; }
    .toast { position: absolute; left: 12px; bottom: 11px; width: 375px; height: 28px; display: flex; justify-content: space-between; padding: 0 4px; font-size: 14px; line-height: 28px; background: rgba(82, 142, 186, 0.72); color: #fff; }
    .toast button { height: 20px; }
  `];

  render() {
    return html`
      <browser-frame></browser-frame>
      <main class="page">
        <div class="logo">${icon("mark", 36)}
          <div class="words"><div class="brand"><span class="indi">INDI</span><span class="engine">ENGINE</span></div><span class="sub">APPS FOR BUSINESS</span></div>
        </div>
        <div class="head">
          <div class="line">
            <span class="user">${this.user}</span>
            <div class="role"><span>Developer</span><button aria-label="Switch role">${icon("inbox", 17)}</button></div>
            <div class="tabs"><button class="on">Entities ${icon("thinClose", 9)}</button><button>Languages ${icon("thinClose", 9)}</button></div>
          </div>
          <div class="crumbs"><div class="trail"><a href="#">Configuration</a><a href="#">» Entities</a></div></div>
        </div>
        <side-menu></side-menu>
        <entity-panel></entity-panel>
        <div class="mask"><restore-dialog></restore-dialog></div>
        <div class="toast"><span>Loading list of backups available on github...</span><button aria-label="Dismiss">${icon("boldClose", 11)}</button></div>
      </main>
      <task-bar></task-bar>`;
  }
}
